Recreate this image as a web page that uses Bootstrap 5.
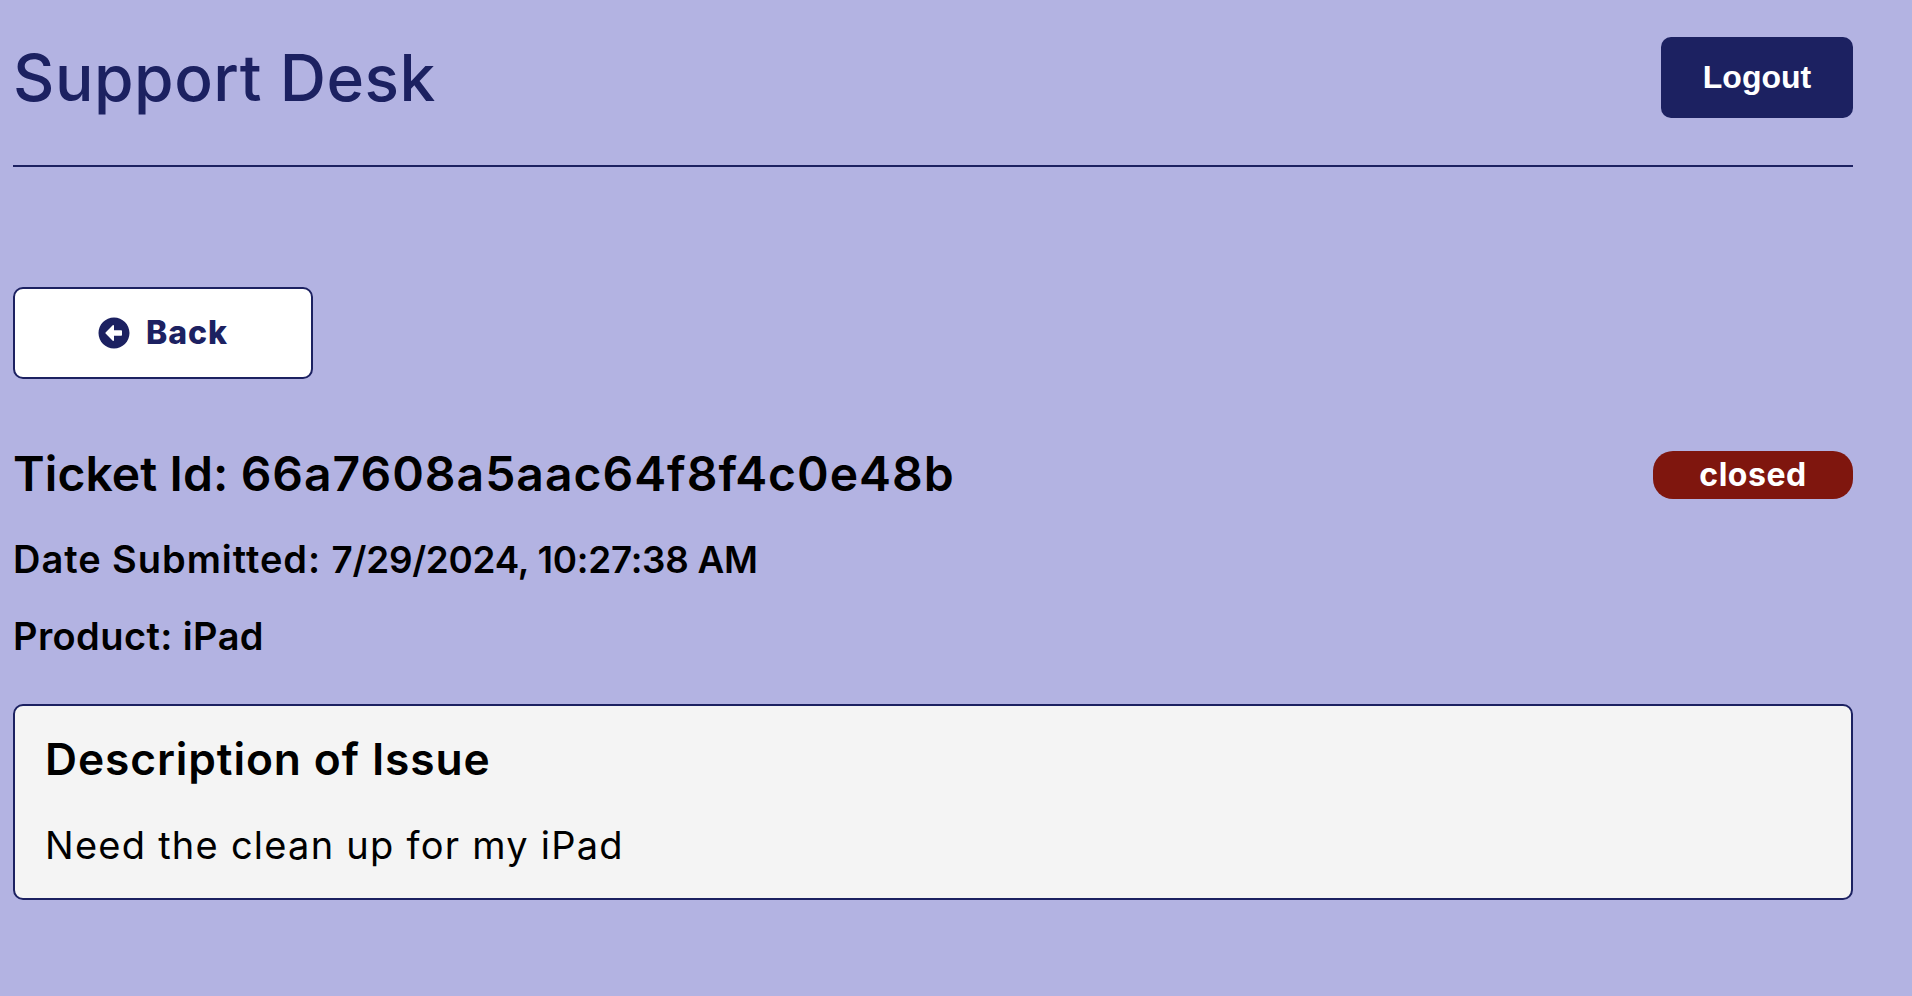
<!DOCTYPE html>
<html lang="en">
<head>
<meta charset="utf-8">
<meta name="viewport" content="width=device-width, initial-scale=1">
<title>Support Desk</title>
<link href="https://cdn.jsdelivr.net/npm/bootstrap@5.3.0/dist/css/bootstrap.min.css" rel="stylesheet">
<style>
:root { --navy: #1c2161; }
body { background: #b3b3e2; color: #000; font-family: Inter, "Open Sans", sans-serif; overflow: hidden; }
.page { padding: 37px 59px 0 13px; }
.topbar { height: 130px; border-bottom: 2px solid var(--navy); }
.brand { color: var(--navy); font-size: 64px; line-height: 81px; font-weight: 450; letter-spacing: .55px; }
.btn-logout { width: 192px; height: 81px; padding: 0 0 2px; border-radius: 10px; background: var(--navy); color: #fff; font: 700 32px/1 "Liberation Sans", sans-serif; }
.btn-back { width: 300px; height: 92px; margin-top: 120px; gap: 16px; border: 2px solid var(--navy); border-radius: 10px; background: #fff; color: var(--navy); font-size: 32px; font-weight: 800; letter-spacing: 1px; }
.ticket-head { margin-top: 59px; }
.ticket-id { font-size: 48px; line-height: 72px; font-weight: 600; letter-spacing: .1px; }
.ticket-id .value { letter-spacing: 1px; }
.ticket-line { margin-top: 20px; font-size: 38px; line-height: 56px; font-weight: 600; letter-spacing: .4px; }
.ticket-line.submitted { margin-top: 21px; letter-spacing: .95px; }
.submitted .value { font-size: 36.8px; letter-spacing: -.25px; }
.status-pill { width: 200px; height: 48px; margin-top: 2px; border-radius: 20px; background: #7f160e; color: #fff; font-size: 32px; line-height: 47px; font-weight: 700; letter-spacing: .5px; }
.issue { height: 196px; margin-top: 40px; border: 2px solid var(--navy); border-radius: 10px; background: #f4f4f4; padding: 20px 30px; }
.issue h3 { font-size: 44.3px; line-height: 66px; font-weight: 600; letter-spacing: .9px; }
.issue p { font-size: 38px; line-height: 58px; margin-top: 24px; letter-spacing: 1.25px; }
</style>
</head>
<body>
<main class="page">
<header class="topbar d-flex justify-content-between align-items-start">
<span class="brand">Support Desk</span>
<button class="btn btn-logout" type="button">Logout</button>
</header>
<a class="btn btn-back d-flex align-items-center justify-content-center p-0" href="#">
<svg width="32" height="32" viewBox="0 0 512 512" fill="currentColor" aria-hidden="true"><path d="M256 504C119 504 8 393 8 256S119 8 256 8s248 111 248 248-111 248-248 248zm116-292H256v-70.900c0-10.700-13-16.100-20.500-8.500L121.200 247.500c-4.700 4.700-4.700 12.200 0 16.900l114.300 114.900c7.600 7.600 20.500 2.200 20.500-8.500V300h116c6.600 0 12-5.400 12-12v-64c0-6.600-5.400-12-12-12z"/></svg>
<span>Back</span></a>
<div class="ticket-head d-flex justify-content-between align-items-center">
<h2 class="ticket-id m-0">Ticket Id: <span class="value">66a7608a5aac64f8f4c0e48b</span></h2>
<span class="status-pill text-center">closed</span>
</div>
<h3 class="ticket-line submitted mb-0">Date Submitted: <span class="value">7/29/2024, 10:27:38 AM</span></h3>
<h3 class="ticket-line mb-0">Product: iPad</h3>
<section class="issue">
<h3 class="m-0">Description of Issue</h3>
<p class="mb-0">Need the clean up for my iPad</p>
</section>
</main>
<script src="https://cdn.jsdelivr.net/npm/bootstrap@5.3.0/dist/js/bootstrap.bundle.min.js"></script>
</body>
</html>
